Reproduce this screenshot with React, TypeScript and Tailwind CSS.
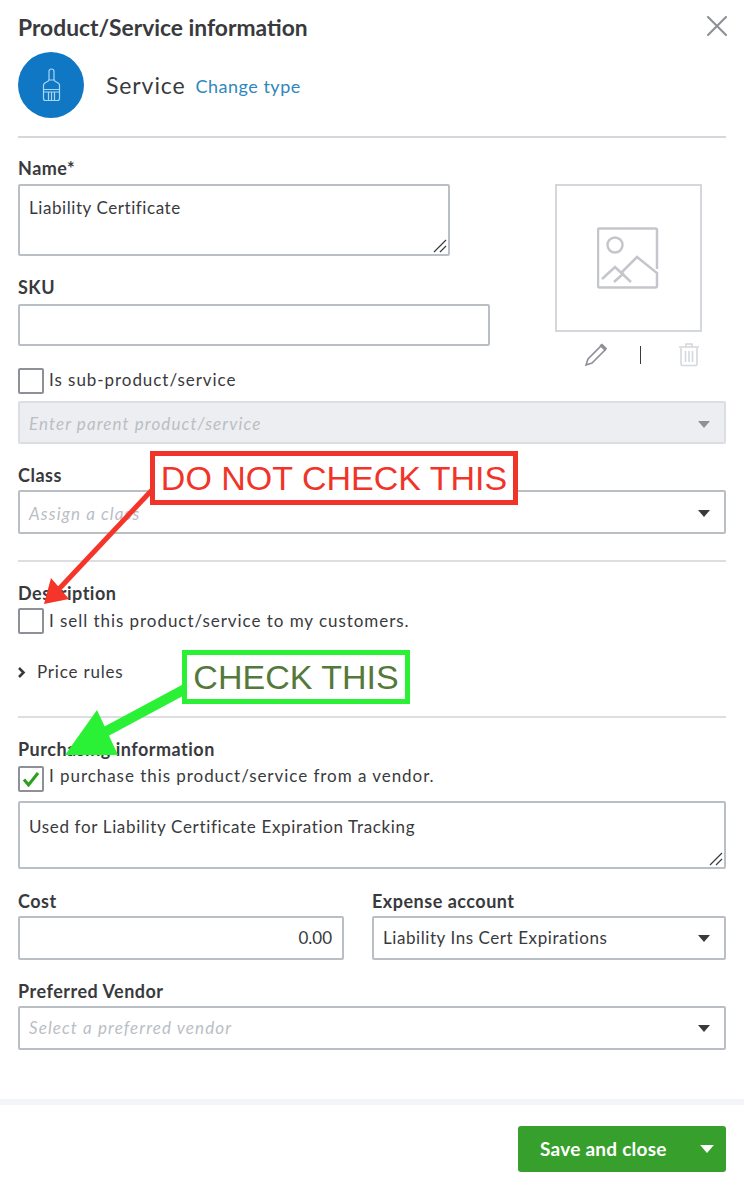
import React from "react";
import { X } from "lucide-react";

const label = "text-[18px] leading-[22px] font-bold tracking-[0.5px] text-[#393a3d]";
const field = "border-2 border-[#babec5] rounded-[2px] bg-white";
const placeholderText = "text-[17px] italic tracking-[1.1px] text-[#babec5]";

function Caret({ color = "#393a3d", big }: { color?: string; big?: boolean }) {
  return (
    <svg width={big ? 14 : 12} height={big ? 8 : 7} viewBox="0 0 12 7" className="shrink-0">
      <path d="M0 0h12L6 7z" fill={color} />
    </svg>
  );
}

function Resize() {
  return (
    <svg width="14" height="14" viewBox="0 0 14 14" className="absolute right-[1px] bottom-[1px]">
      <path d="M13 1 1 13M13 7l-6 6" stroke="#393a3d" strokeWidth="1.2" fill="none" />
    </svg>
  );
}

function Select({ text, placeholder, className = "" }: { text: string; placeholder?: boolean; className?: string }) {
  return (
    <div className={`${field} h-[44px] flex items-center justify-between pl-[9px] pr-[14px] ${className}`}>
      <span className={placeholder ? placeholderText : "text-[17px] tracking-[0.57px] text-[#393a3d]"}>{text}</span>
      <Caret />
    </div>
  );
}

function Check({ text, checked, textClass = "-mt-[3px]" }: { text: string; checked?: boolean; textClass?: string }) {
  return (
    <div className="flex items-center gap-[5px]">
      <div className="w-[26px] h-[26px] border-2 border-[#8d9096] rounded-[2px] flex items-center justify-center bg-white">
        {checked && (
          <svg width="18" height="16" viewBox="0 0 18 16">
            <path d="M2 8.5 6.5 14 16 2" stroke="#2ca01c" strokeWidth="3" fill="none" />
          </svg>
        )}
      </div>
      <span className={`text-[17px] tracking-[0.95px] text-[#393a3d] ${textClass}`}>{text}</span>
    </div>
  );
}

function Callout({ text, className }: { text: string; className: string }) {
  return (
    <div className={`absolute flex items-center justify-center bg-white border-[5px] font-['Liberation_Sans',sans-serif] text-[34px] leading-none ${className}`}>
      {text}
    </div>
  );
}

export default function App() {
  return (
    <div className="relative w-[744px] h-[1188px] bg-white overflow-hidden font-['Lato',sans-serif] text-[#393a3d]">
      <div className="px-[18px]">
        <div className="flex items-center justify-between h-[52px] pt-[2px]">
          <h1 className="text-[22.800px] font-bold text-[#393a3d]">Product/Service information</h1>
          <X className="w-[36px] h-[36px] -mr-[9px] -mt-[3px] text-[#8d9096]" strokeWidth={1.4} />
        </div>

        <div className="flex items-center h-[66px]">
          <div className="w-[66px] h-[66px] rounded-full bg-[#0f77c4] flex items-center justify-center">
            <svg width="19" height="34" viewBox="0 0 19 34" fill="none" stroke="#a9d6f5" strokeWidth="1.2">
              <path d="M7 12V3.500a2.500 2.500 0 0 1 5 0V12" />
              <path d="M7 12c0 2-5.500 2-5.500 5v13.500A2 2 0 0 0 3.500 32.500h12a2 2 0 0 0 2-2V17c0-3-5.500-3-5.500-5z" />
              <path d="M1.500 21.500h16M1.500 24h16M6.500 24v8M9.500 24v8M12.500 24v8" />
            </svg>
          </div>
          <span className="ml-[22px] text-[23px] tracking-[0.9px] font-normal text-[#393a3d]">Service</span>
          <span className="ml-[10px] mt-[3px] text-[18px] tracking-[0.5px] text-[#2f87bd]">Change type</span>
        </div>

        <div className="h-[2px] bg-[#d4d7dc] mt-[18px]" />

        <div className="flex justify-between mt-[19px]">
          <div className="w-[472px]">
            <div className={label}>Name*</div>
            <div className={`${field} relative w-[432px] h-[72px] mt-[5px] pl-[9px] pt-[9px] text-[17px] tracking-[0.57px]`}>
              Liability Certificate
              <Resize />
            </div>
            <div className={`${label} mt-[20px]`}>SKU</div>
            <div className={`${field} h-[42px] mt-[6px]`} />
          </div>
          <div className="w-[147px] mr-[24px] mt-[27px]">
            <div className="w-[147px] h-[148px] border-2 border-[#d4d7dc] flex items-center justify-center">
              <svg width="62" height="62" viewBox="0 0 62 62" fill="none" stroke="#c4c6cc" strokeWidth="2.5" className="-ml-[2px]">
                <path d="M60 42V3a1.500 1.500 0 0 0-1.500-1.500h-56A1.500 1.500 0 0 0 1 3v56a1.500 1.500 0 0 0 1.500 1.500h56A1.500 1.500 0 0 0 60 59V46L40 30 24 46" />
                <circle cx="18" cy="18" r="7.500" />
                <path d="M5 52 18 40l16 15M17 55l10-9" />
              </svg>
            </div>
            <div className="flex items-center mt-[10px] h-[26px] pl-[29px]">
              <svg width="24" height="24" viewBox="0 0 24 24" fill="none" stroke="#8d9096" strokeWidth="1.600">
                <path d="M2 22l2-6L17 3l4 4L8 20z" />
                <path d="M16 3l2-1.500 4 4-1 2" fill="#8d9096" />
              </svg>
              <div className="w-[1px] h-[18px] bg-[#393a3d] ml-[32px]" />
              <svg width="20" height="24" viewBox="0 0 20 24" fill="none" stroke="#d4d7dc" strokeWidth="1.600" className="ml-[38px]">
                <path d="M2 5v16a1.500 1.500 0 0 0 1.500 1.500h13A1.500 1.500 0 0 0 18 21V5M0 4h20M7 4V1h6v3M6.500 8v11M10 8v11M13.500 8v11" />
              </svg>
            </div>
          </div>
        </div>

        <Check text="Is sub-product/service" />
        <div className="h-[43px] mt-[7px] pt-[3px] bg-[#eceef1] border-2 border-[#dcdee2] rounded-[2px] flex items-center justify-between pl-[9px] pr-[14px]">
          <span className={placeholderText}>Enter parent product/service</span>
          <Caret color="#8d9096" />
        </div>

        <div className={`${label} mt-[20px]`}>Class</div>
        <Select text="Assign a class" placeholder className="mt-[4px] pt-[3px]" />

        <div className="h-[2px] bg-[#dcdee2] mt-[26px]" />

        <div className={`${label} mt-[20px]`}>Description</div>
        <div className="mt-[4px]">
          <Check text="I sell this product/service to my customers." textClass="-mt-[1px]" />
        </div>

        <div className="flex items-center mt-[24px] h-[28px]">
          <svg width="9" height="11" viewBox="0 0 9 11" fill="none" stroke="#393a3d" strokeWidth="2.600" className="-ml-[1px]">
            <path d="M2 1l4.500 4.500L2 10" />
          </svg>
          <span className="ml-[11px] text-[17px] tracking-[0.8px]">Price rules</span>
        </div>

        <div className="h-[2px] bg-[#dcdee2] mt-[30px]" />

        <div className={`${label} mt-[20px]`}>Purchasing information</div>
        <div className="mt-[6px]">
          <Check checked text="I purchase this product/service from a vendor." textClass="-mt-[7px]" />
        </div>
        <div className={`${field} relative h-[68px] mt-[9px] pl-[9px] pt-[11px] text-[17px] tracking-[0.66px]`}>
          Used for Liability Certificate Expiration Tracking
          <Resize />
        </div>

        <div className="flex justify-between mt-[21px]">
          <div className="w-[326px]">
            <div className={label}>Cost</div>
            <div className={`${field} h-[44px] mt-[4px] flex items-center justify-end pr-[10px] text-[17px]`}>0.00</div>
          </div>
          <div className="w-[354px]">
            <div className={label}>Expense account</div>
            <Select text="Liability Ins Cert Expirations" className="mt-[4px]" />
          </div>
        </div>

        <div className={`${label} mt-[20px]`}>Preferred Vendor</div>
        <Select text="Select a preferred vendor" placeholder className="mt-[4px]" />
      </div>

      <div className="h-[6px] bg-[#f4f5f8] mt-[49px]" />
      <div className="flex justify-end px-[18px] mt-[21px]">
        <div className="w-[208px] h-[46px] bg-[#37a02c] rounded-[3px] flex items-center justify-between pl-[22px] pr-[12px] text-white">
          <span className="text-[19px] font-bold tracking-[0.25px]">Save and close</span>
          <Caret color="#ffffff" big />
        </div>
      </div>

      <svg width="744" height="1188" className="absolute inset-0 pointer-events-none">
        <path d="M152 490 58 590" stroke="#f6352a" strokeWidth="5" />
        <path d="M44 604 51 578 69 599z" fill="#f6352a" />
        <path d="M187 688 105 732" stroke="#2bf136" strokeWidth="10" />
        <path d="M97 710 65 755 118 755z" fill="#2bf136" />
      </svg>
      <Callout text="DO NOT CHECK THIS" className="left-[150px] top-[451px] w-[368px] h-[54px] border-[#f0342a] text-[#f0342a]" />
      <Callout text="CHECK THIS" className="left-[182px] top-[650px] w-[228px] h-[54px] border-[#2bf136] text-[#55793a]" />
    </div>
  );
}
